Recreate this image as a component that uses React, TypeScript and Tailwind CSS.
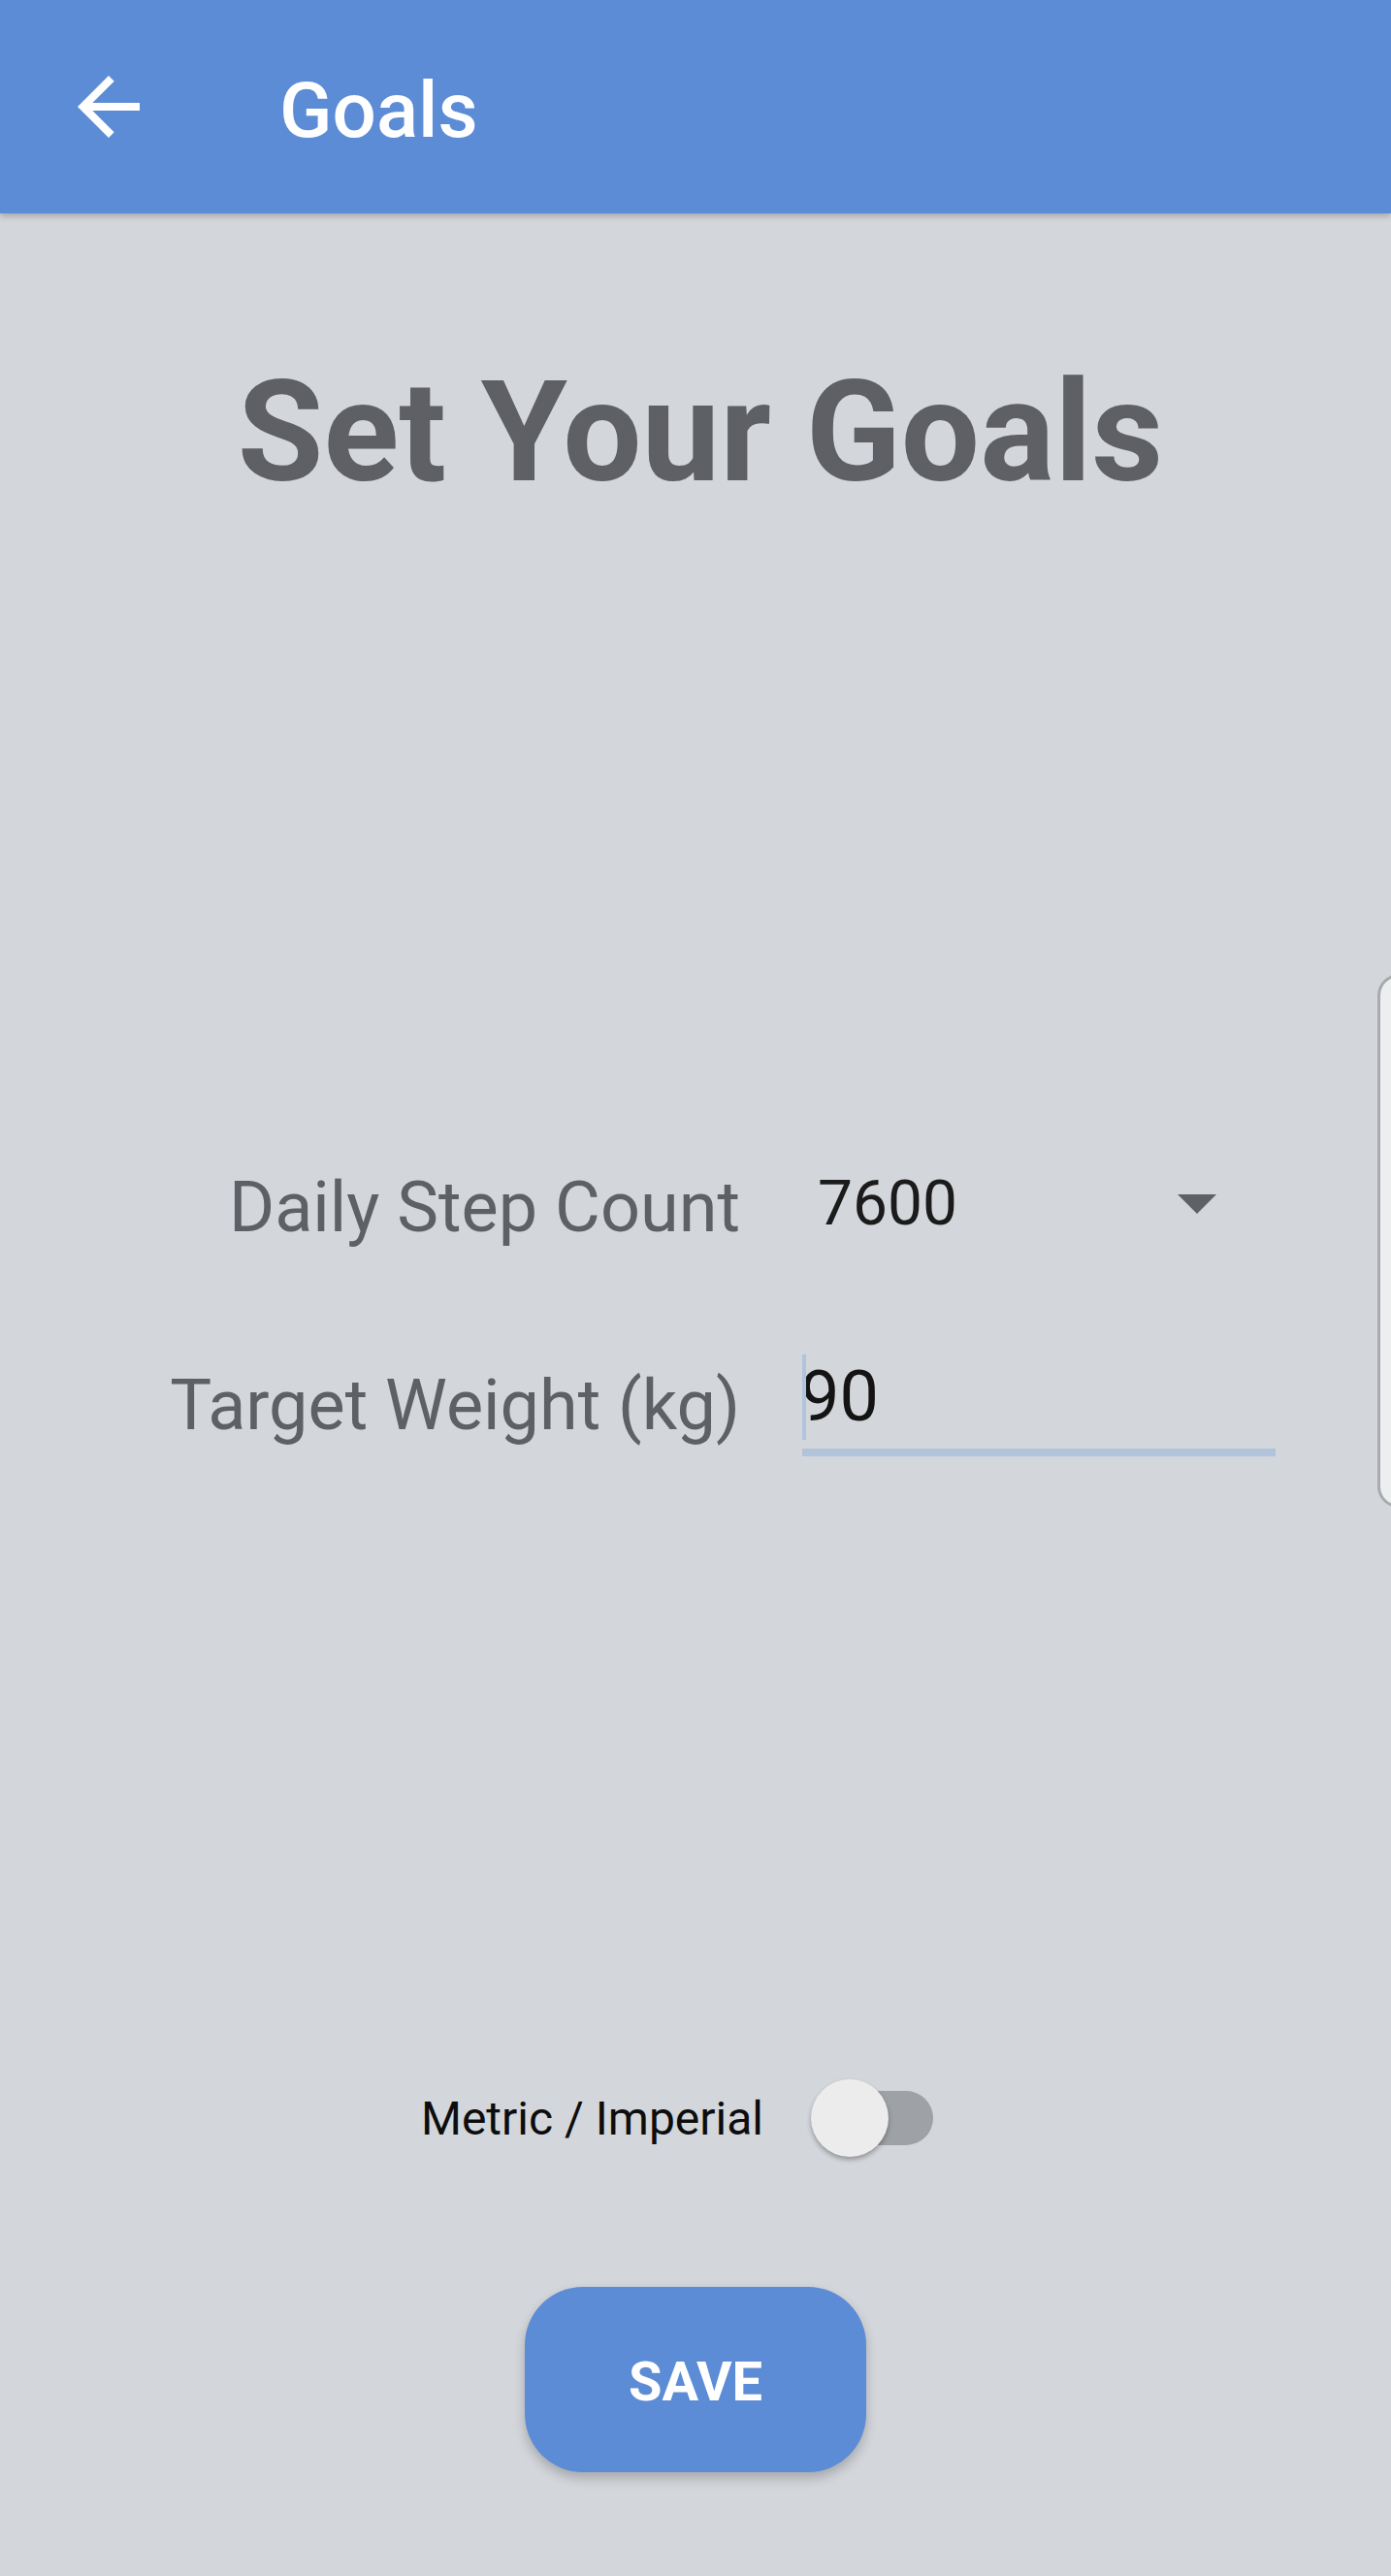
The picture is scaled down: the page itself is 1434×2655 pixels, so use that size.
import React from "react";

export default function App() {
  return (
    <div className="relative min-h-[2655px] w-full overflow-hidden bg-[#d3d6db] font-['Roboto','Noto_Sans',sans-serif]">
      <header className="relative z-10 flex h-[220px] items-center bg-[#5d8cd6] shadow-[0_3px_6px_rgba(0,0,0,0.22)]">
        <div className="ml-[64px] h-[96px] w-[96px]">
          <svg viewBox="0 0 24 24" className="h-full w-full" fill="#ffffff">
            <path d="M20 11H7.83l5.59-5.59L12 4l-8 8 8 8 1.41-1.41L7.83 13H20v-2z" />
          </svg>
        </div>
        <h1 className="ml-[128px] mt-[8px] text-[80px] font-medium leading-[94px] text-white">Goals</h1>
      </header>

      <h2 className="mt-[154px] pl-[10px] text-center text-[144px] font-bold leading-[144px] text-[#5f6065]">
        Set Your Goals
      </h2>

      <div className="mt-[679px]">
        <div className="flex h-[96px] items-center pl-[160px]">
          <div className="w-[603px] text-right text-[72px] leading-[96px] text-[#5f6065]">Daily Step Count</div>
          <div className="ml-[64px] flex w-[488px] items-center justify-between pb-[8px] pl-[16px] pr-[61px]">
            <span className="text-[64px] leading-[88px] text-[#1b1b1b]">7600</span>
            <span className="h-0 w-0 border-l-[20px] border-r-[20px] border-t-[20px] border-l-transparent border-r-transparent border-t-[#606166]" />
          </div>
        </div>

        <div className="mt-[99px] flex items-start pl-[160px]">
          <div className="mt-[9px] w-[603px] text-right text-[72px] leading-[96px] text-[#5f6065]">Target Weight (kg)</div>
          <div className="ml-[64px] flex w-[488px] flex-col">
            <div className="flex h-[96px] items-center">
              <span className="relative z-10 h-[88px] w-[4px] bg-[#b0c4dc]" />
              <span className="-ml-[6px] text-[72px] leading-[96px] text-[#141414]">90</span>
            </div>
            <div className="mt-[5px] h-[8px] bg-[#b2c4da]" />
          </div>
        </div>
      </div>

      <div className="mt-[642px] flex h-[80px] items-center justify-center">
        <span className="pt-[2px] text-[48px] leading-[56px] text-[#0d0d0d]">Metric / Imperial</span>
        <div className="relative ml-[49px] mr-[38px] h-[80px] w-[126px]">
          <div className="absolute left-[4px] right-0 top-[12px] h-[56px] rounded-full bg-[#9ea2a6]" />
          <div className="absolute left-0 top-0 h-[80px] w-[80px] rounded-full bg-[#ececec] shadow-[0_3px_5px_rgba(0,0,0,0.3)]" />
        </div>
      </div>

      <div className="mt-[134px] flex justify-center">
        <button className="h-[191px] w-[352px] rounded-[60px] bg-[#5d8cd6] pt-[4px] text-[56px] font-bold text-white shadow-[0_6px_12px_rgba(0,0,0,0.22)]">
          SAVE
        </button>
      </div>

      <div className="absolute left-[1420px] top-[1004px] h-[550px] w-[40px] rounded-l-[22px] border-[3px] border-[#a8abae] bg-[#eceef0]" />
    </div>
  );
}
